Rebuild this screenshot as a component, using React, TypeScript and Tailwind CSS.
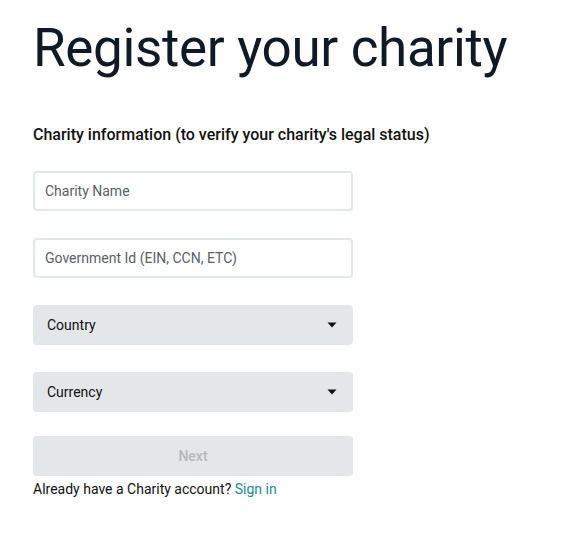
import React from 'react';

function Caret() {
  return (
    <svg width="10" height="6" viewBox="0 0 10 6" className="ml-auto">
      <path d="M0.5 0.5h9L5 5.5z" fill="#111" />
    </svg>
  );
}

export default function App() {
  const fields = ['Charity Name', 'Government Id (EIN, CCN, ETC)'];
  const selects = ['Country', 'Currency'];

  return (
    <div className="min-h-screen bg-white px-[33px] pt-[14px] font-['Roboto',sans-serif]">
      <h1 className="whitespace-nowrap text-[53px] leading-[68px] tracking-[-0.35px] text-[#0f1a24]">
        Register your charity
      </h1>

      <h2 className="mt-[41px] text-[16px] font-medium text-[#111]">
        Charity information (to verify your charity's legal status)
      </h2>

      <div className="mt-[24px] flex w-[320px] flex-col gap-[27px]">
        {fields.map((f) => (
          <input
            key={f}
            placeholder={f}
            className="h-[40px] rounded-[4px] border-2 border-[#e3e7ea] px-[10px] text-[14px] text-[#111] outline-none placeholder:text-[#5a6068]"
          />
        ))}
        {selects.map((s) => (
          <div
            key={s}
            className="flex h-[40px] items-center rounded-[4px] bg-[#e3e7ea] pl-[14px] pr-[16px] text-[14px] text-[#111]"
          >
            <span>{s}</span>
            <Caret />
          </div>
        ))}
      </div>

      <button
        type="button"
        disabled
        className="mt-[24px] flex h-[40px] w-[320px] items-center justify-center rounded-[4px] bg-[#e3e7ea] text-[14px] font-medium text-[#b5b8bb]"
      >
        Next
      </button>

      <p className="mt-[3px] text-[14px] text-[#111]">
        Already have a Charity account? <a className="text-[#1a8c8c]">Sign in</a>
      </p>
    </div>
  );
}
